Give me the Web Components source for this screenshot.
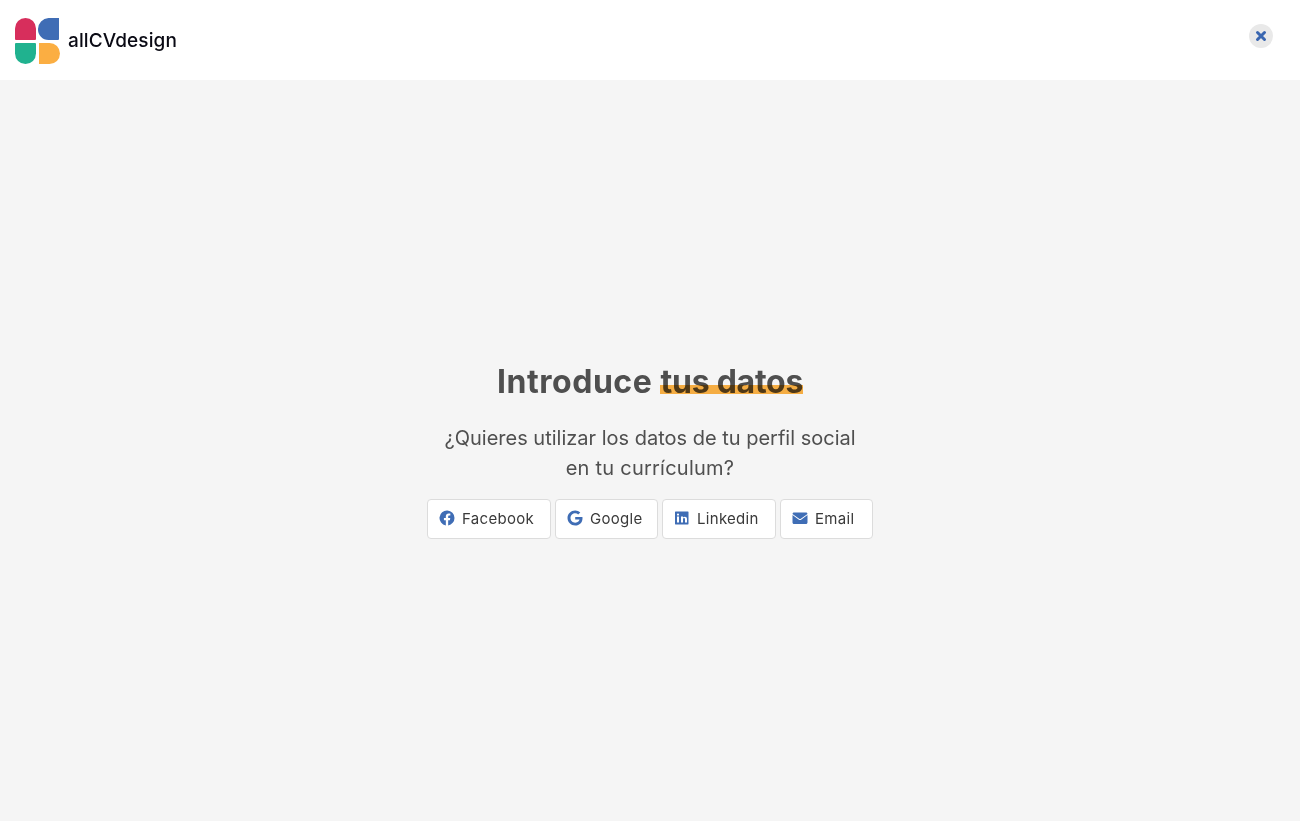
<!DOCTYPE html>
<html lang="es"><head><meta charset="utf-8"><title>allCVdesign</title>
<style>
html,body{margin:0;height:100%}
body{background:#f5f5f5;font-family:"Inter","Liberation Sans",sans-serif;overflow:hidden}
</style></head><body>
<cv-page>
  <cv-header></cv-header>
  <cv-intro>
    <span slot="title">Introduce <cv-mark>tus datos</cv-mark></span>
    <span slot="lead">¿Quieres utilizar los datos de tu perfil social<br><span style="letter-spacing:.24px">en tu currículum?</span></span>
    <cv-button icon="facebook" w="124">Facebook</cv-button>
    <cv-button icon="google" w="103">Google</cv-button>
    <cv-button icon="linkedin" w="114">Linkedin</cv-button>
    <cv-button icon="email" w="93">Email</cv-button>
  </cv-intro>
</cv-page>
<script>
function def(name,html,init){customElements.define(name,class extends HTMLElement{constructor(){super();this.attachShadow({mode:'open'}).innerHTML=html;}connectedCallback(){if(init)init(this)}})}
def('cv-page',`<style>:host{display:flex;flex-direction:column;height:821px}</style><slot></slot>`);
def('cv-header',`<style>
:host{display:flex;flex:none;height:80px;box-sizing:border-box;background:#fff;padding:18px 27px 0 15px;justify-content:space-between;align-items:flex-start}
.logo{display:flex;align-items:center;gap:8px;height:46px}
.name{font:500 19px/1 "Inter","Liberation Sans",sans-serif;color:#0a0a14;letter-spacing:.1px;position:relative;top:-1px}
svg{display:block}
.close{width:24px;height:24px;border-radius:50%;background:#e9e9e9;border:0;padding:0;margin-top:6px;display:flex;align-items:center;justify-content:center}
</style>
<div class="logo"><svg width="45" height="46" viewBox="0 0 45 46">
<path d="M0 10.500A10.500 10.500 0 0 1 21 10.500V21a1 1 0 0 1-1 1H1a1 1 0 0 1-1-1Z" fill="#d72e5c"/>
<path d="M44 0V21a1 1 0 0 1-1 1H33.500A10.500 10.500 0 0 1 23 11 11 11 0 0 1 33.500 0Z" fill="#3f6db5"/>
<path d="M0 26a1 1 0 0 1 1-1H20a1 1 0 0 1 1 1V35.500A10.500 10.500 0 0 1 0 35.500Z" fill="#20b28f"/>
<path d="M24 25H34.500A10.500 10.500 0 0 1 34.500 46H24Z" fill="#fbae42"/></svg>
<span class="name">allCVdesign</span></div>
<button class="close" aria-label="Cerrar"><svg width="12" height="12" viewBox="0 0 12 12"><path d="M2.500 2.500l7 7m0-7l-7 7" stroke="#3a66b0" stroke-width="3" stroke-linecap="round"/></svg></button>`);
def('cv-intro',`<style>
:host{display:flex;flex:1;flex-direction:column;align-items:center;box-sizing:border-box;padding-top:281px;color:#4f4f4f;font-family:"Inter","Liberation Sans",sans-serif}
h1{margin:0;font:700 32px/42px "Inter","Liberation Sans",sans-serif;letter-spacing:.55px;color:#4f4f4f}
p{margin:20px 0 16px;font:400 20px/30px "Inter","Liberation Sans",sans-serif;text-align:center;color:#4f4f4f}
.btns{display:flex;gap:4px}
</style><h1><slot name="title"></slot></h1><p><slot name="lead"></slot></p><div class="btns"><slot></slot></div>`);
def('cv-mark',`<style>:host{display:inline-block;position:relative;letter-spacing:-.25px}
i{position:absolute;left:0;right:0;top:24px;height:9px;background:#ffb445;mix-blend-mode:multiply}</style><slot></slot><i></i>`);
const ICONS={
facebook:`<svg width="16" height="16" viewBox="0 0 16 16"><path fill="#3f6db5" d="M15.500 8a7.500 7.500 0 1 0-8.670 7.410V10.170H4.920V8h1.910V6.350c0-1.880 1.120-2.920 2.830-2.920.82 0 1.680.15 1.680.15v1.850h-.95c-.93 0-1.220.58-1.220 1.170V8h2.080l-.33 2.170H9.170v5.240A7.500 7.500 0 0 0 15.500 8Z"/></svg>`,
google:`<svg width="16" height="16" viewBox="0 0 16 16"><path fill="#3f6db5" d="M15.500 8.200C15.500 12.500 12.600 15.500 8.200 15.500 4 15.500.5 12.100.5 8S4 .5 8.200.5c2 0 3.800.7 5.100 2L11.200 4.500C8.500 1.900 3.500 3.800 3.500 8c0 2.600 2.100 4.700 4.700 4.700 3 0 4.100-2.100 4.300-3.200H8.200V6.900h7.200c.1.400.1.800.1 1.300Z"/></svg>`,
linkedin:`<svg width="16" height="16" viewBox="0 0 16 16"><path fill="#3f6db5" fill-rule="evenodd" d="M1.500 1.500h12.500c.3 0 .5.200.5.500v12c0 .3-.2.500-.5.500H1.500c-.3 0-.5-.2-.5-.500V2c0-.3.200-.5.500-.5ZM3 6.500v6h2v-6H3Zm1-3a1.100 1.100 0 1 0 0 2.200 1.100 1.100 0 0 0 0-2.200Zm3 3v6h2V9.400c0-1.700 2-1.800 2 0v3.100h2V8.900c0-2.800-3-2.700-4-1.300V6.500H7Z"/></svg>`,
email:`<svg width="16" height="16" viewBox="0 0 16 16"><path fill="#3f6db5" d="M.5 5.100V12.500c0 .8.700 1.500 1.500 1.500H14c.8 0 1.500-.7 1.500-1.500V5.100L9.100 9.700c-.7.500-1.500.5-2.200 0L.5 5.100ZM2 2.500c-.8 0-1.500.7-1.500 1.500l6.700 4.800c.5.300 1.100.3 1.600 0L15.500 4c0-.8-.7-1.500-1.500-1.500H2Z"/></svg>`};
def('cv-button',`<style>
:host{display:block}
button{display:flex;align-items:center;gap:7px;height:40px;box-sizing:border-box;width:var(--w);padding:0 0 2px 11px;background:#fff;border:1px solid #dcdcdc;border-radius:4px;font:400 15px/1 "Inter","Liberation Sans",sans-serif;letter-spacing:.3px;color:#3a3a3a}
svg{display:block;flex:none}
</style><button><span id="i" style="display:flex"></span><slot></slot></button>`,el=>{
 const s=el.shadowRoot;s.getElementById('i').innerHTML=ICONS[el.getAttribute('icon')];
 s.querySelector('button').style.setProperty('--w',el.getAttribute('w')+'px');
});
</script></body></html>
